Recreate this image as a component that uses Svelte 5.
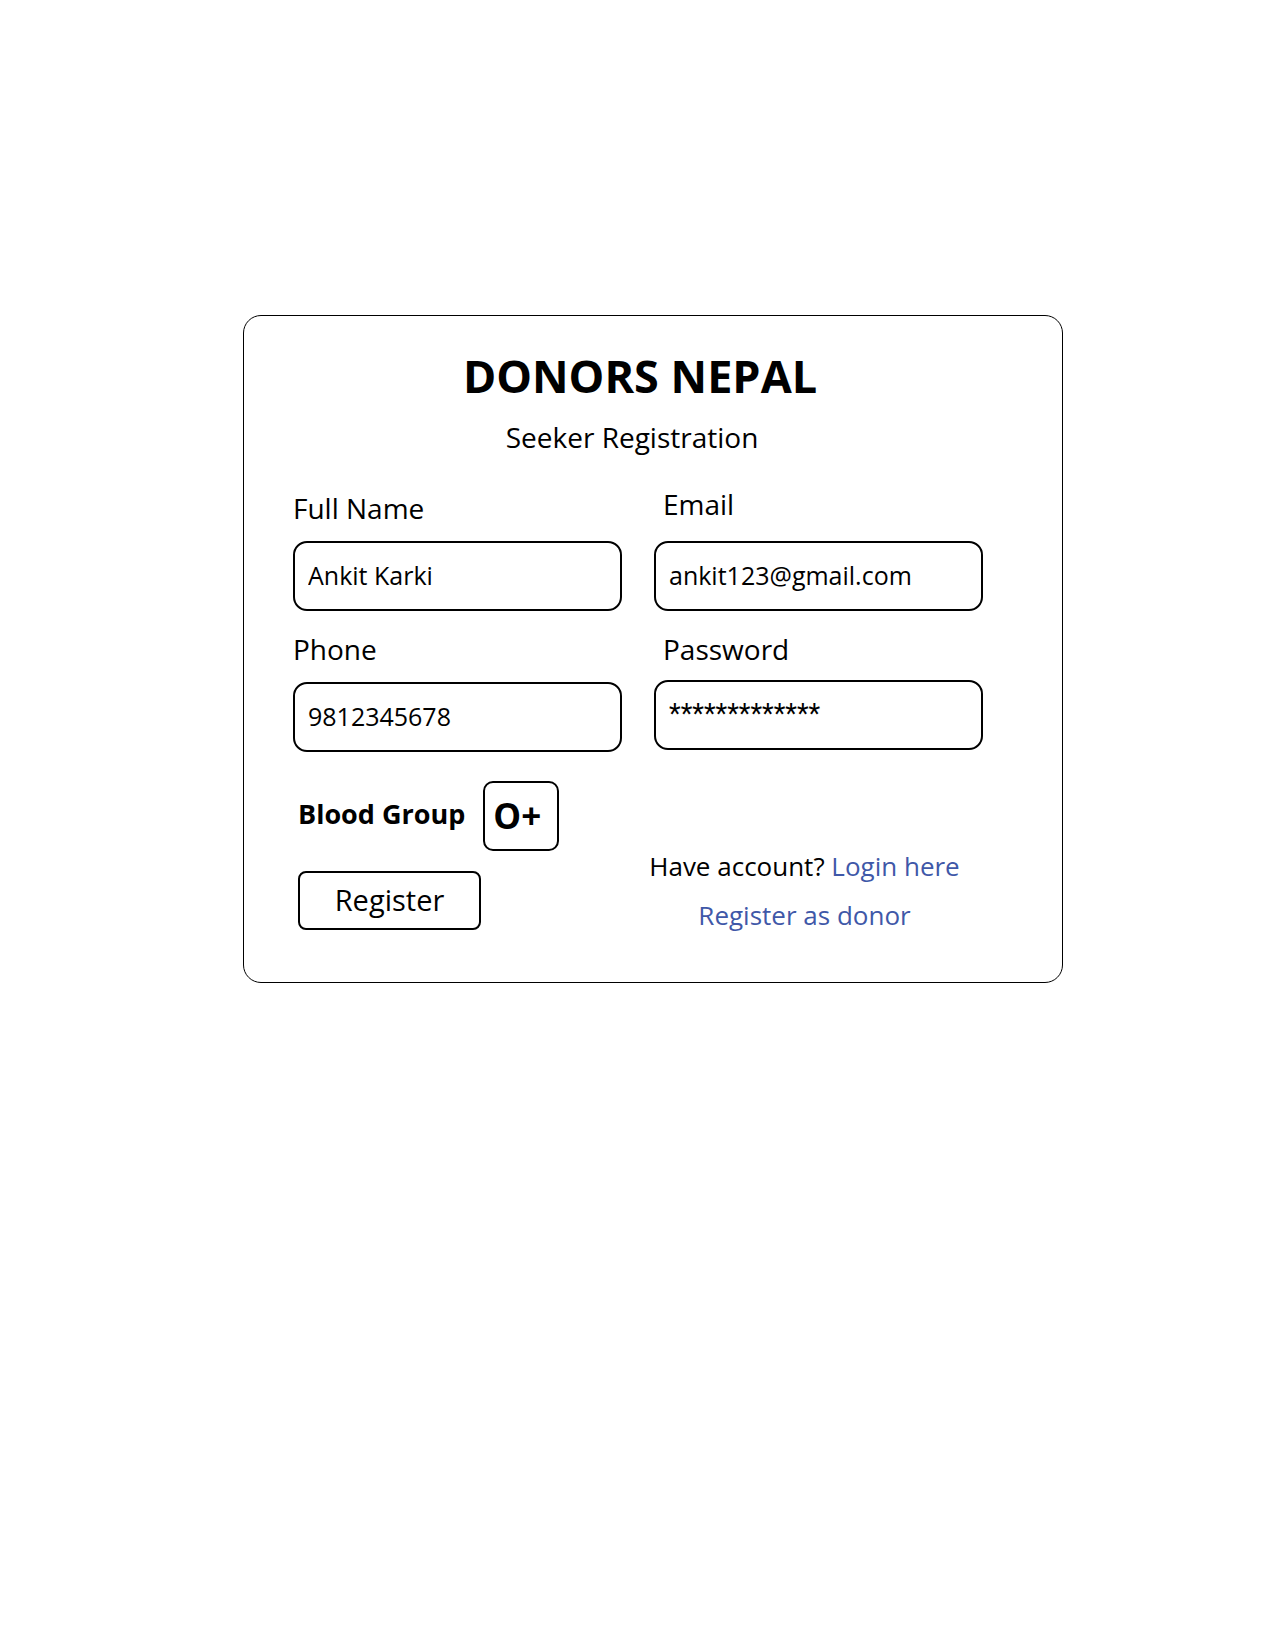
<script>
  let fullName = $state('Ankit Karki');
  let email = $state('ankit123@gmail.com');
  let phone = $state('9812345678');
  let password = $state('*************');
  let bloodGroup = $state('O+');
  const groups = ['A+', 'A-', 'B+', 'B-', 'AB+', 'AB-', 'O+', 'O-'];
</script>

<main>
  <form class="card" onsubmit={(e) => e.preventDefault()}>
    <header>
      <h1>DONORS NEPAL</h1>
      <p class="subtitle">Seeker Registration</p>
    </header>

    <div class="columns">
      <div class="column start">
        <div class="field">
          <label for="name">Full Name</label>
          <input id="name" type="text" bind:value={fullName} />
        </div>
        <div class="field">
          <label for="phone">Phone</label>
          <input id="phone" type="tel" bind:value={phone} />
        </div>
        <div class="blood">
          <label for="blood">Blood Group</label>
          <select id="blood" bind:value={bloodGroup}>
            {#each groups as group}
              <option value={group}>{group}</option>
            {/each}
          </select>
        </div>
        <button type="submit">Register</button>
      </div>

      <div class="column end">
        <div class="field roomy">
          <label for="email">Email</label>
          <input id="email" type="email" bind:value={email} />
        </div>
        <div class="field snug">
          <label for="password">Password</label>
          <input id="password" class="masked" type="text" autocomplete="off" bind:value={password} />
        </div>
        <div class="links">
          <p>Have account? <a href="#login">Login here</a></p>
          <p><a href="#donor">Register as donor</a></p>
        </div>
      </div>
    </div>
  </form>
</main>

<style>
  :global(body) {
    margin: 0;
    background: #fff;
  }
  main {
    padding: 315px 212px 64px 243px;
    font-family: 'Open Sans', 'Noto Sans', sans-serif;
    color: #000;
  }
  .card {
    border: 1px solid #000;
    border-radius: 18px;
    padding: 30px 79px 52px 49px;
  }
  header {
    text-align: center;
  }
  h1 {
    margin: 0;
    padding-left: 4px;
    font-size: 45px;
    line-height: 60px;
    font-weight: 700;
  }
  .subtitle {
    margin: 13px 0 0;
    padding-right: 12px;
    font-size: 28px;
    line-height: 36px;
  }
  .columns {
    display: grid;
    grid-template-columns: 1fr 1fr;
    column-gap: 32px;
    margin-top: 31px;
  }
  .column {
    display: flex;
    flex-direction: column;
    gap: 20px;
    min-width: 0;
  }
  .start {
    padding-top: 4px;
  }
  .field {
    display: flex;
    flex-direction: column;
    gap: 15px;
  }
  .roomy {
    gap: 19px;
  }
  .snug {
    gap: 13px;
  }
  label {
    font-size: 28px;
    line-height: 36px;
  }
  .end label {
    padding-left: 9px;
  }
  input,
  select,
  button {
    box-sizing: border-box;
    margin: 0;
    border: 2px solid #000;
    background: #fff;
    color: #000;
    font-family: inherit;
  }
  input {
    width: 100%;
    height: 70px;
    padding: 0 13px 2px;
    border-radius: 14px;
    font-size: 25px;
  }
  .masked {
    font-family: Roboto, sans-serif;
    font-size: 27px;
  }
  .blood {
    display: flex;
    align-items: center;
    gap: 18px;
    padding: 9px 0 0 5px;
  }
  .blood label {
    padding-bottom: 4px;
    font-size: 27px;
    font-weight: 700;
  }
  select {
    appearance: none;
    width: 76px;
    height: 70px;
    padding: 0 8px 2px;
    border-radius: 10px;
    font-size: 35px;
    font-weight: 700;
  }
  button {
    width: 183px;
    height: 59px;
    margin-left: 5px;
    padding: 0 0 2px;
    border-radius: 8px;
    font-size: 29px;
  }
  .links {
    display: flex;
    flex-direction: column;
    align-items: center;
    gap: 19px;
    margin-top: auto;
    padding-right: 28px;
    font-size: 26px;
    line-height: 30px;
    white-space: nowrap;
  }
  .links p {
    margin: 0;
  }
  a {
    color: #3f58a8;
    text-decoration: none;
  }
</style>
